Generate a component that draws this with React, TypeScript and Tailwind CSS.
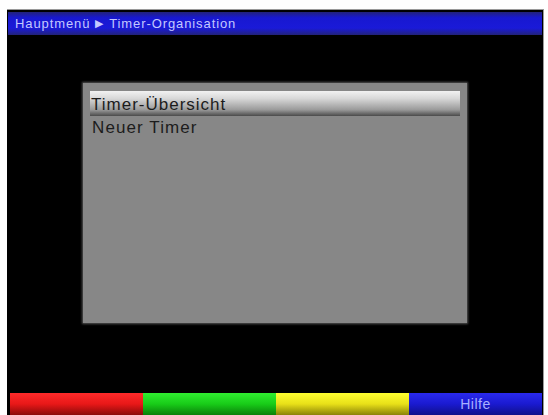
export default function App() {
  return (
    <div className="h-[415px] w-[548px] overflow-hidden bg-white pl-[7px] pt-[9px] font-['Liberation_Sans',Arial,sans-serif]">
      <div className="flex h-[406px] w-[537px] flex-col border-t border-r border-[#9a9a9a] bg-black">
        {/* header */}
        <div className="mx-px mt-[2px] flex h-[23px] items-center bg-[linear-gradient(to_bottom,#22227a_0%,#1818d0_25%,#1a1ad8_70%,#22227a_100%)] pl-[7px] text-[13px] tracking-[0.9px] text-[#c4c8ff]">
          Hauptmenü <span className="mx-[5px] text-[11px]">▶</span> Timer-Organisation
        </div>

        {/* menu panel */}
        <div className="ml-[76px] mt-[48px] h-[240px] w-[384px] bg-[#878787] px-[7px] pt-[8px] shadow-[0_0_2px_1px_#555]">
          <div className="flex h-[25px] items-center bg-[linear-gradient(to_bottom,#f2f2f2_0%,#d8d8d8_30%,#9a9a9a_75%,#4a4a4a_100%)] pl-px pt-[2px] text-[17px] tracking-[1px] text-[#1c1c1c]">
            Timer-Übersicht
          </div>
          <div className="flex h-[22px] items-center pl-[2px] pt-px text-[17px] tracking-[1.1px] text-[#1c1c1c]">
            Neuer Timer
          </div>
        </div>

        {/* colour keys */}
        <div className="ml-[3px] mt-[70px] flex h-[22px] w-[532px]">
          <div className="w-[133px] bg-[linear-gradient(to_bottom,#ff2a2a_0%,#e81818_50%,#8a0a0a_100%)]" />
          <div className="w-[133px] bg-[linear-gradient(to_bottom,#30ee30_0%,#18cc18_50%,#0a800a_100%)]" />
          <div className="w-[133px] bg-[linear-gradient(to_bottom,#ffff30_0%,#e8e018_50%,#8a8208_100%)]" />
          <div className="flex w-[133px] items-center justify-center bg-[linear-gradient(to_bottom,#2a2aee_0%,#1a1ad0_50%,#10108a_100%)] text-[14px] tracking-[0.5px] text-[#a8b0ff]">
            Hilfe
          </div>
        </div>
      </div>
    </div>
  );
}
